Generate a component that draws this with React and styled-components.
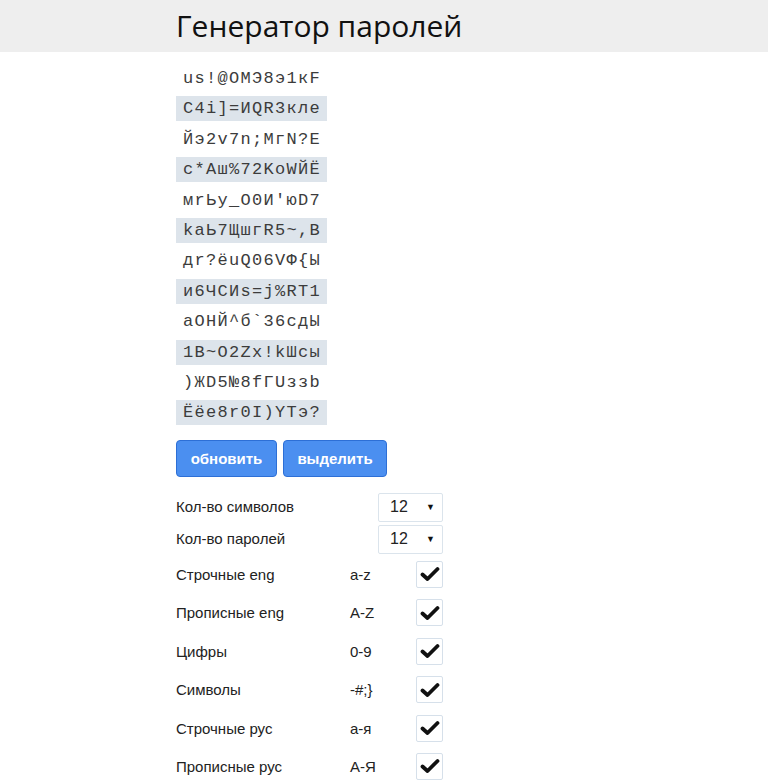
import React from 'react'
import styled, { createGlobalStyle } from 'styled-components'

const GlobalStyle = createGlobalStyle`
  body {
    margin: 0;
    background: #fff;
    font-family: 'Liberation Sans', Arial, sans-serif;
    color: #222;
  }
`

const Header = styled.div`
  background-color: #eeeeee;
  height: 52px;
  padding-left: 176px;
  display: flex;
  align-items: center;
`

const Title = styled.h1`
  margin: 0 0 2px;
  font-family: 'Open Sans', 'DejaVu Sans', sans-serif;
  font-weight: 400;
  font-size: 30px;
  color: #111;
`

const Main = styled.div`
  padding: 14px 0 0 176px;
`

const PasswordList = styled.div`
  display: flex;
  flex-direction: column;
  align-items: flex-start;
  gap: 5.4px;
`

const Password = styled.div`
  font-family: 'Liberation Mono', 'Courier New', monospace;
  font-size: 17px;
  letter-spacing: 1.3px;
  height: 25px;
  line-height: 25px;
  padding: 0 6px 0 7px;
  color: #3c3c3c;
  background-color: ${p => (p.$shaded ? '#dde4eb' : 'transparent')};
  white-space: pre;
`

const Buttons = styled.div`
  display: flex;
  gap: 6px;
  margin-top: 15px;
`

const Button = styled.button`
  height: 37px;
  width: ${p => p.$width}px;
  border: 1px solid #2d6fd6;
  border-radius: 4px;
  background-color: #4b8ff0;
  color: #fff;
  font-family: 'Liberation Sans', Arial, sans-serif;
  font-weight: 700;
  font-size: 15px;
  padding: 0;
`

const Options = styled.div`
  margin-top: 14px;
  display: flex;
  flex-direction: column;
`

const SelectRow = styled.div`
  display: flex;
  align-items: center;
  height: 32px;
`

const Label = styled.div`
  width: ${p => p.$width}px;
  font-size: 15px;
  color: #222;
  margin-top: ${p => p.$shift || 0}px;
`

const Select = styled.div`
  width: 65px;
  height: 29px;
  border: 1px solid #dbe4ec;
  border-radius: 2px;
  display: flex;
  align-items: center;
  justify-content: space-between;
  padding: 0 7px 0 11px;
  box-sizing: border-box;
  font-size: 16px;
  color: #222;
`

const Arrow = styled.span`
  font-size: 9px;
  color: #111;
`

const CheckRow = styled.div`
  display: flex;
  align-items: center;
  height: 38.4px;
  &:first-of-type {
    margin-top: 2px;
  }
`

const Range = styled.div`
  width: 66px;
  font-size: 15px;
  color: #222;
`

const CheckBox = styled.div`
  width: 27px;
  height: 27px;
  box-sizing: border-box;
  border: 1px solid #d6e0ea;
  border-radius: 2px;
  display: flex;
  align-items: center;
  justify-content: center;
`

const passwords = [
  'us!@OMЭ8э1кF',
  'C4i]=ИQR3кле',
  'Йэ2v7n;MгN?E',
  'c*Aш%72KoWЙЁ',
  'мrЬy_O0И\'юD7',
  'kaЬ7ЩшгR5~,B',
  'дr?ёuQ06VФ{Ы',
  'и6ЧCИs=j%RT1',
  'aOНЙ^б`36сдЫ',
  '1B~O2Zx!kШсы',
  ')ЖD5№8fГUззb',
  'Ёёе8r0I)YTэ?',
]

const charsets = [
  ['Строчные eng', 'a-z'],
  ['Прописные eng', 'A-Z'],
  ['Цифры', '0-9'],
  ['Символы', '-#;}'],
  ['Строчные рус', 'а-я'],
  ['Прописные рус', 'А-Я'],
]

const Check = () => (
  <svg width="20" height="16" viewBox="0 0 20 16">
    <path d="M2.5 8.5 L7.5 13 L17.5 3" fill="none" stroke="#111" strokeWidth="3.8" strokeLinecap="round" strokeLinejoin="round" />
  </svg>
)

export default function App() {
  return (
    <>
      <GlobalStyle />
      <Header>
        <Title>Генератор паролей</Title>
      </Header>
      <Main>
        <PasswordList>
          {passwords.map((p, i) => (
            <Password key={i} $shaded={i % 2 === 1}>{p}</Password>
          ))}
        </PasswordList>
        <Buttons>
          <Button $width={101}>обновить</Button>
          <Button $width={104}>выделить</Button>
        </Buttons>
        <Options>
          <SelectRow>
            <Label $width={202} $shift={-2}>Кол-во символов</Label>
            <Select>12<Arrow>▼</Arrow></Select>
          </SelectRow>
          <SelectRow>
            <Label $width={202} $shift={-2}>Кол-во паролей</Label>
            <Select>12<Arrow>▼</Arrow></Select>
          </SelectRow>
          {charsets.map(([name, range]) => (
            <CheckRow key={name}>
              <Label $width={174}>{name}</Label>
              <Range>{range}</Range>
              <CheckBox><Check /></CheckBox>
            </CheckRow>
          ))}
        </Options>
      </Main>
    </>
  )
}
